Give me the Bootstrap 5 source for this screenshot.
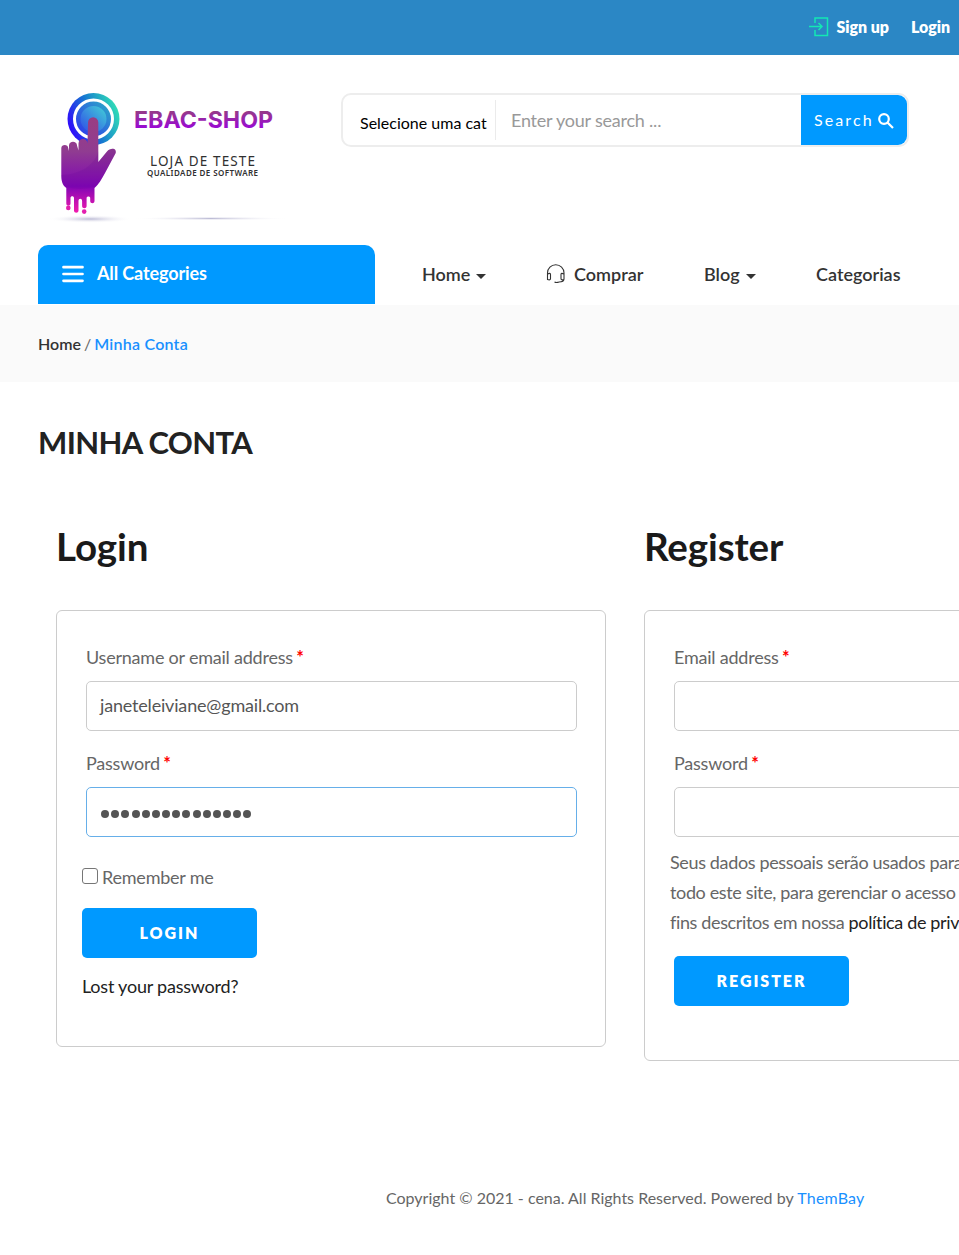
<!DOCTYPE html>
<html lang="pt-BR">
<head>
<meta charset="utf-8">
<meta name="viewport" content="width=device-width, initial-scale=1">
<title>Minha Conta - EBAC-SHOP</title>
<link href="https://cdn.jsdelivr.net/npm/bootstrap@5.3.0/dist/css/bootstrap.min.css" rel="stylesheet">
<style>
  body { font-family: Lato, "Liberation Sans", sans-serif; font-size: 18px; line-height: 30px; color: #666; overflow: hidden; }
  a { text-decoration: none; color: #222; }
  .page { width: 1224px; }
  .topbar { height: 55px; width: 959px; background: #2b87c5; padding: 0 9px 1px 0; font-size: 16px; font-weight: 800; letter-spacing: -.05px; }
  .topbar a { color: #fff; }
  .masthead { height: 190px; padding: 38px 0 0 38px; }
  .logo { width: 303px; height: 140px; flex: none; }
  .search { width: 568px; height: 54px; border: 2px solid #ededed; border-radius: 10px; }
  .search-cat { width: 153px; height: 40px; margin-top: 5px; padding: 8px 0 0 17px; border-right: 1px solid #ebebeb; font-size: 16px; color: #000; }
  .search-text { padding: 10px 0 0 15px; color: #999; letter-spacing: -.22px; }
  .search-btn { width: 106px; border-radius: 0 9px 9px 0; background: #09f; color: #fff; font-size: 16px; letter-spacing: 2.1px; padding: 0 0 0 12px; gap: 4px; }
  .mainnav { height: 60px; padding-left: 38px; }
  .categories { width: 337px; height: 59px; padding: 0 0 2px 24px; gap: 13px; border-radius: 10px 10px 0 0; background: #09f; color: #fff; font-weight: 700; letter-spacing: -.12px; }
  .categories span { margin-top: -2px; }
  .menu { padding: 0 0 2px 47px; font-weight: 600; color: #333; }
  .caret { border: 5px solid transparent; border-top-color: #333; border-bottom: 0; margin: 4px 0 0 6px; }
  .crumbs { height: 77px; padding-left: 38px; background: #fafafa; font-size: 16px; font-weight: 600; gap: 3px; }
  .crumbs a { color: #333; }
  .crumbs .current { color: #1890ff; letter-spacing: .24px; }
  .page-title { padding: 42px 0 1px 38px; margin: 0; font-size: 31px; line-height: 36px; font-weight: 700; letter-spacing: -.65px; color: #222; }
  .accounts { padding: 63px 0 0 56px; gap: 38px; }
  .account { width: 550px; flex: none; }
  .account h2 { font-size: 38.5px; line-height: 44px; font-weight: 700; letter-spacing: -.1px; color: #1a1a1a; margin: 0 0 42px; }
  .panel { border: 1px solid #ccc; border-radius: 6px; padding: 31px 28px 0 29px; letter-spacing: -.22px; }
  .panel-login { height: 437px; }
  .panel-register { height: 451px; }
  .field { height: 50px; margin: 9px 0 17px; padding: 8px 13px; border: 1px solid #ccc; border-radius: 5px; font-size: 18px; line-height: 30px; letter-spacing: -.18px; color: #555; }
  .field.focused { border-color: #66afe9; box-shadow: none; }
  .req { color: red; font-weight: 700; margin-left: -1px; }
  .check-box { width: 16px; height: 16px; border: 1px solid #767676; border-radius: 3px; margin: -2px 4px 0 0; }
  .btn-main { width: 175px; height: 50px; background: #09f; color: #fff; border: 0; border-radius: 5px; padding-bottom: 7px; font-size: 16px; font-weight: 800; letter-spacing: 1.95px; text-transform: uppercase; }
  .out { margin-left: -4px; }
  .dots { gap: 2.18px; padding: 3px 0 0 14px; }
  .dots i { width: 8px; height: 8px; border-radius: 50%; background: #555; }
  .privacy { width: 530px; margin: -7px 0 19px -4px; letter-spacing: -.36px; white-space: nowrap; }
  .copyright { padding: 122px 0 0 386px; font-size: 16px; }
</style>
</head>
<body>
<div class="topbar d-flex align-items-center justify-content-end">
  <svg width="20" height="20" viewBox="0 0 20 20" fill="none" stroke="#13e8b4" stroke-width="1.5"><path d="M6 6V1h12.500v17.500H6V13M0 9.500h13M9.500 6l3.500 3.500L9.500 13"/></svg>
  <a href="#" style="margin-left:7px">Sign up</a>
  <a href="#" style="margin-left:22px">Login</a>
</div>
<div class="page">
  <header class="masthead d-flex align-items-start">
    <a href="#" class="logo">
      <svg width="250" height="135" viewBox="0 0 250 135">
        <defs>
          <linearGradient id="ring" x1="0" y1=".7" x2="1" y2=".3"><stop offset="0" stop-color="#3200ff"/><stop offset=".5" stop-color="#167bd0"/><stop offset="1" stop-color="#32e4b5"/></linearGradient>
          <linearGradient id="disc" x1="0" y1="1" x2="1" y2="0"><stop offset="0" stop-color="#304be8"/><stop offset="1" stop-color="#42d2d6"/></linearGradient>
          <linearGradient id="rim" x1="0" y1="1" x2="1" y2="0"><stop offset="0" stop-color="#2d2bf0"/><stop offset="1" stop-color="#2cb4c4"/></linearGradient>
          <linearGradient id="hand" gradientUnits="userSpaceOnUse" x1="0" y1="25" x2="0" y2="120"><stop offset="0" stop-color="#993d82"/><stop offset=".35" stop-color="#903c91"/><stop offset=".72" stop-color="#8106b5"/><stop offset="1" stop-color="#f41bae"/></linearGradient>
          <linearGradient id="word" x1="0" y1="0" x2="0" y2="1"><stop offset=".2" stop-color="#963d86"/><stop offset=".8" stop-color="#9a08d5"/></linearGradient>
          <radialGradient id="shade"><stop offset="0" stop-color="#bcbbd5"/><stop offset="1" stop-color="#fff" stop-opacity="0"/></radialGradient>
        </defs>
        <ellipse cx="52" cy="126" rx="42" ry="4" fill="url(#shade)"/>
        <ellipse cx="173" cy="125.500" rx="78" ry="2" fill="url(#shade)"/>
        <circle cx="55.500" cy="26" r="26" fill="url(#ring)"/>
        <circle cx="55.500" cy="26" r="19" fill="url(#rim)" stroke="#fff" stroke-width="3"/>
        <circle cx="55.500" cy="26" r="13" fill="url(#disc)"/>
        <path fill="url(#hand)" d="M50 29.500a5.150 5.150 0 0 1 10.300 0V69L69 58.500C72 54.500 79 54.500 77.700 60L67 80C63 87 61 91 56.500 95V108c0 3-4.300 3-4.300 0v-3c0-2-3.600-2-3.600 0v8c0 3-4.500 3-4.500 0v-5c0-3-3.600-3-3.600 0v9.500c0 3-4.500 3-4.500 0V105c0-2.500-3.500-2.500-3.500 0v5.500c0 3-4.200 3-4.200 0V95C24 92 23.300 87 23.300 82V55c0-4 6.900-4 6.900 0l.8 3v-5.500c0-5 8-5 8 0l1.500 5V50.500c0-6 9-6 9 0z"/>
        <path fill="#5b0092" opacity=".15" d="M23.300 82C42 82 58 71 60.300 58V69L69 58.500C72 54.500 79 54.500 77.700 60L67 80C63 87 61 91 56.500 94q-14 4-28 0C24 91 23.300 87 23.300 82z"/>
        <g fill="#e31fae"><circle cx="30.300" cy="114.900" r="2.300"/><circle cx="46.200" cy="118.600" r="2.300"/></g>
        <text x="96" y="35" textLength="139" lengthAdjust="spacingAndGlyphs" font-family="Inter, sans-serif" font-size="23.500" font-weight="700" fill="url(#word)">EBAC-SHOP</text>
        <text x="112" y="72.500" textLength="105" font-family="'Noto Sans', sans-serif" font-size="13.500" fill="#303030">LOJA DE TESTE</text>
        <text x="109" y="83" textLength="111" font-family="'Noto Sans', sans-serif" font-size="8" font-weight="600" fill="#303030">QUALIDADE DE SOFTWARE</text>
      </svg>
    </a>
    <form class="search d-flex">
      <div class="search-cat">Selecione uma cat</div>
      <div class="search-text flex-grow-1">Enter your search ...</div>
      <button type="button" class="search-btn btn d-flex align-items-center">Search
        <svg width="16" height="16" viewBox="0 0 16 16" fill="none" stroke="#fff" stroke-width="2.200" style="margin-top:2px"><circle cx="6" cy="6" r="4.800"/><path d="M9.500 9.500L15 15"/></svg>
      </button>
    </form>
  </header>
  <nav class="mainnav d-flex">
    <div class="categories d-flex align-items-center">
      <svg width="22" height="18" viewBox="0 0 22 18" stroke="#fff" stroke-width="2.700" stroke-linecap="round"><path d="M1.500 2.200h19M1.500 9h19M1.500 15.800h19"/></svg><span>All Categories</span>
    </div>
    <div class="menu d-flex align-items-center">
      <span class="d-flex align-items-center" style="width:124px">Home<i class="caret"></i></span>
      <span class="d-flex align-items-center" style="width:158px"><svg class="me-2" width="20" height="20" viewBox="0 0 20 20" fill="none" stroke="#333" stroke-width="1.100"><path d="M1.500 10V9a8.200 8.200 0 0 1 16.500 0v6c0 2-2 3-5 3M1.500 10v5.500q3 1 3-1v-4q0-2-3-.5M18 10q-3-1.500-3 .5v4q0 2 3 1M8.500 18q2 1 4.500 0"/></svg>Comprar</span>
      <span class="d-flex align-items-center" style="width:112px">Blog<i class="caret"></i></span>
      <span>Categorias</span>
    </div>
  </nav>
  <div class="crumbs d-flex align-items-center"><a href="#">Home</a><span class="fw-normal">/</span><span class="current">Minha Conta</span></div>
  <h1 class="page-title">MINHA CONTA</h1>
  <main class="accounts d-flex align-items-start">
    <section class="account">
      <h2>Login</h2>
      <div class="panel panel-login">
        <div>Username or email address <span class="req">*</span></div>
        <div class="field form-control">janeteleiviane@gmail.com</div>
        <div>Password <span class="req">*</span></div>
        <div class="field focused form-control d-flex align-items-center dots"><i></i><i></i><i></i><i></i><i></i><i></i><i></i><i></i><i></i><i></i><i></i><i></i><i></i><i></i><i></i></div>
        <div class="out d-flex align-items-center" style="padding-top:8px"><span class="check-box"></span>Remember me</div>
        <button type="button" class="btn btn-main out d-block" style="margin-top:16px">Login</button>
        <a href="#" class="out d-block" style="margin-top:13px">Lost your password?</a>
      </div>
    </section>
    <section class="account">
      <h2>Register</h2>
      <div class="panel panel-register">
        <div>Email address <span class="req">*</span></div>
        <div class="field form-control"></div>
        <div>Password <span class="req">*</span></div>
        <div class="field form-control"></div>
        <p class="privacy">Seus dados pessoais serão usados para aprimorar a sua<br>todo este site, para gerenciar o acesso a sua conta e<br>fins descritos em nossa <a href="#">política de privacidade</a>.</p>
        <button type="button" class="btn btn-main">Register</button>
      </div>
    </section>
  </main>
  <footer class="copyright">Copyright © 2021 - cena. All Rights Reserved. Powered by <a href="#" style="color:#1890ff;letter-spacing:.15px">ThemBay</a></footer>
</div>
<script src="https://cdn.jsdelivr.net/npm/bootstrap@5.3.0/dist/js/bootstrap.bundle.min.js"></script>
</body>
</html>
